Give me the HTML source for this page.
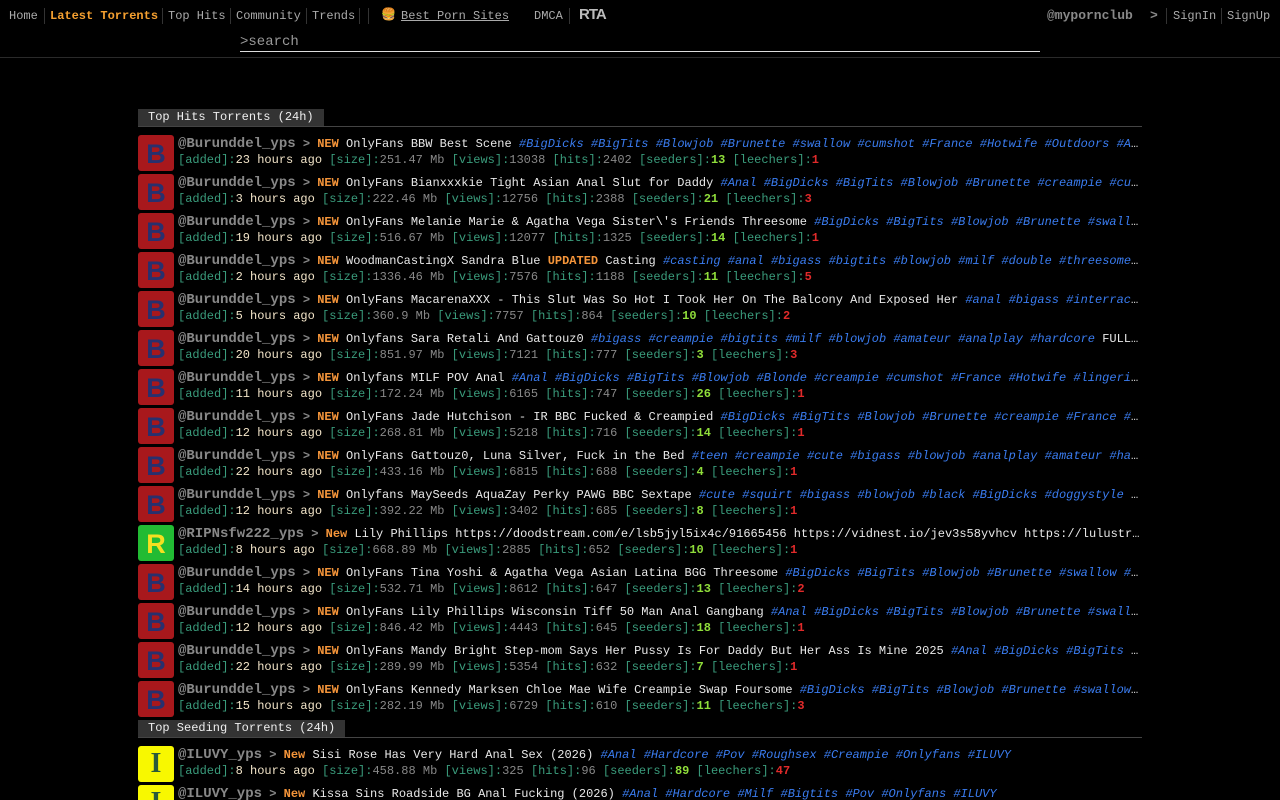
<!DOCTYPE html>
<html style="width:1280px;height:800px;overflow:hidden"><head><meta charset="utf-8"><style>
*{margin:0;padding:0;box-sizing:border-box}
body{width:1280px;height:800px;overflow:hidden;background:#000;font-family:"Liberation Mono",monospace;font-size:12px;color:#ddd;position:relative}
.n{position:absolute;top:9px;font-size:12px;color:#aaa;line-height:14px;white-space:nowrap}
.sep{position:absolute;top:8px;width:1px;height:16px;background:#333}
#search{position:absolute;left:240px;top:33px;width:800px;height:19px;border-bottom:1px solid #ddd;color:#999;font-size:14px;line-height:18px}
#hl{position:absolute;left:0;top:57px;width:1280px;height:1px;background:#2a2a2a}
.sec{position:absolute;left:138px;width:1004px;height:18px;border-bottom:1px solid #444}
.sec span{display:inline-block;background:#333;color:#eee;font-size:12px;line-height:17px;padding:0 10px 0 10px;height:17px}
.row{position:absolute;left:138px;width:1004px;height:39px}
.av{position:absolute;left:0;top:0;width:36px;height:36px;border-radius:3px;text-align:center;font:bold 27px/38px "Liberation Sans",sans-serif}
.l1,.l2{position:absolute;left:40px;width:964px;white-space:nowrap;overflow:hidden;text-overflow:ellipsis;line-height:16px}
.l1{top:1px}.l2{top:17px}
.u{font-size:14px;font-weight:bold;color:#888}
.g{color:#888;font-weight:bold}
.nw{color:#f5953a;font-weight:bold}
.t{color:#e8e8e8}
.tg{color:#3a7cf0;font-style:italic}
.lb{color:#3a9c7c}
.tm{color:#f2e4c8}
.v{color:#888}
.sd{color:#8fdd3a;font-weight:bold}
.lc{color:#e02a2a;font-weight:bold}
.rb{background:#a8181c;color:#28306e}
</style></head><body>
<div class="n" style="left:9px">Home</div><div class="sep" style="left:44px"></div>
<div class="n" style="left:50px;color:#f5a030;font-weight:bold">Latest Torrents</div><div class="sep" style="left:162px"></div>
<div class="n" style="left:168px">Top Hits</div><div class="sep" style="left:230px"></div>
<div class="n" style="left:236px">Community</div><div class="sep" style="left:306px"></div>
<div class="n" style="left:312px">Trends</div><div class="sep" style="left:359px"></div><div class="sep" style="left:368px"></div>
<div class="n" style="left:381px;top:8px;font-size:12px">🍔</div>
<div class="n" style="left:401px;text-decoration:underline">Best Porn Sites</div>
<div class="n" style="left:534px">DMCA</div><div class="sep" style="left:569px"></div>
<div class="n" style="left:579px;top:6px;font:bold 15px 'Liberation Sans',sans-serif;color:#bbb;letter-spacing:-1px">RTA</div>
<div class="n" style="left:1047px;top:9px;font-size:13px;font-weight:bold;color:#888">@myporncl ub</div>
<div class="n" style="left:1047px;top:9px;font-size:13px;font-weight:bold;color:#888;background:#000;width:110px">@mypornclub</div>
<div class="n" style="left:1150px;top:9px;font-size:13px;font-weight:bold;color:#888">&gt;</div>
<div class="sep" style="left:1166px"></div>
<div class="n" style="left:1173px">SignIn</div><div class="sep" style="left:1221px"></div>
<div class="n" style="left:1227px">SignUp</div>
<div id="search">&gt;search</div>
<div id="hl"></div>

<div class="sec" style="top:109px"><span>Top Hits Torrents (24h)</span></div>

<div class="row" style="top:135px"><div class="av rb">B</div><div class="l1"><span class="u">@Burunddel_yps</span> <span class="g">&gt;</span> <span class="nw">NEW</span> <span class="t">OnlyFans BBW Best Scene</span> <span class="tg">#BigDicks #BigTits #Blowjob #Brunette #swallow #cumshot #France #Hotwife #Outdoors #Amateur</span></div><div class="l2"><span class="lb">[added]:</span><span class="tm">23 hours ago</span> <span class="lb">[size]:</span><span class="v">251.47 Mb</span> <span class="lb">[views]:</span><span class="v">13038</span> <span class="lb">[hits]:</span><span class="v">2402</span>  <span class="lb">[seeders]:</span><span class="sd">13</span> <span class="lb">[leechers]:</span><span class="lc">1</span></div></div>

<div class="row" style="top:174px"><div class="av rb">B</div><div class="l1"><span class="u">@Burunddel_yps</span> <span class="g">&gt;</span> <span class="nw">NEW</span> <span class="t">OnlyFans Bianxxxkie Tight Asian Anal Slut for Daddy</span> <span class="tg">#Anal #BigDicks #BigTits #Blowjob #Brunette #creampie #cumshot</span></div><div class="l2"><span class="lb">[added]:</span><span class="tm">3 hours ago</span> <span class="lb">[size]:</span><span class="v">222.46 Mb</span> <span class="lb">[views]:</span><span class="v">12756</span> <span class="lb">[hits]:</span><span class="v">2388</span>  <span class="lb">[seeders]:</span><span class="sd">21</span> <span class="lb">[leechers]:</span><span class="lc">3</span></div></div>

<div class="row" style="top:213px"><div class="av rb">B</div><div class="l1"><span class="u">@Burunddel_yps</span> <span class="g">&gt;</span> <span class="nw">NEW</span> <span class="t">OnlyFans Melanie Marie &amp; Agatha Vega Sister\'s Friends Threesome</span> <span class="tg">#BigDicks #BigTits #Blowjob #Brunette #swallow #cumshot</span></div><div class="l2"><span class="lb">[added]:</span><span class="tm">19 hours ago</span> <span class="lb">[size]:</span><span class="v">516.67 Mb</span> <span class="lb">[views]:</span><span class="v">12077</span> <span class="lb">[hits]:</span><span class="v">1325</span>  <span class="lb">[seeders]:</span><span class="sd">14</span> <span class="lb">[leechers]:</span><span class="lc">1</span></div></div>

<div class="row" style="top:252px"><div class="av rb">B</div><div class="l1"><span class="u">@Burunddel_yps</span> <span class="g">&gt;</span> <span class="nw">NEW</span> <span class="t">WoodmanCastingX Sandra Blue</span> <span class="nw">UPDATED</span> <span class="t">Casting</span> <span class="tg">#casting #anal #bigass #bigtits #blowjob #milf #double #threesome #gangbang</span></div><div class="l2"><span class="lb">[added]:</span><span class="tm">2 hours ago</span> <span class="lb">[size]:</span><span class="v">1336.46 Mb</span> <span class="lb">[views]:</span><span class="v">7576</span> <span class="lb">[hits]:</span><span class="v">1188</span>  <span class="lb">[seeders]:</span><span class="sd">11</span> <span class="lb">[leechers]:</span><span class="lc">5</span></div></div>

<div class="row" style="top:291px"><div class="av rb">B</div><div class="l1"><span class="u">@Burunddel_yps</span> <span class="g">&gt;</span> <span class="nw">NEW</span> <span class="t">OnlyFans MacarenaXXX - This Slut Was So Hot I Took Her On The Balcony And Exposed Her</span> <span class="tg">#anal #bigass #interracial</span></div><div class="l2"><span class="lb">[added]:</span><span class="tm">5 hours ago</span> <span class="lb">[size]:</span><span class="v">360.9 Mb</span> <span class="lb">[views]:</span><span class="v">7757</span> <span class="lb">[hits]:</span><span class="v">864</span>  <span class="lb">[seeders]:</span><span class="sd">10</span> <span class="lb">[leechers]:</span><span class="lc">2</span></div></div>

<div class="row" style="top:330px"><div class="av rb">B</div><div class="l1"><span class="u">@Burunddel_yps</span> <span class="g">&gt;</span> <span class="nw">NEW</span> <span class="t">Onlyfans Sara Retali And Gattouz0</span> <span class="tg">#bigass #creampie #bigtits #milf #blowjob #amateur #analplay #hardcore</span> <span class="t">FULL HD</span></div><div class="l2"><span class="lb">[added]:</span><span class="tm">20 hours ago</span> <span class="lb">[size]:</span><span class="v">851.97 Mb</span> <span class="lb">[views]:</span><span class="v">7121</span> <span class="lb">[hits]:</span><span class="v">777</span>  <span class="lb">[seeders]:</span><span class="sd">3</span> <span class="lb">[leechers]:</span><span class="lc">3</span></div></div>

<div class="row" style="top:369px"><div class="av rb">B</div><div class="l1"><span class="u">@Burunddel_yps</span> <span class="g">&gt;</span> <span class="nw">NEW</span> <span class="t">Onlyfans MILF POV Anal</span> <span class="tg">#Anal #BigDicks #BigTits #Blowjob #Blonde #creampie #cumshot #France #Hotwife #lingerie #milf</span></div><div class="l2"><span class="lb">[added]:</span><span class="tm">11 hours ago</span> <span class="lb">[size]:</span><span class="v">172.24 Mb</span> <span class="lb">[views]:</span><span class="v">6165</span> <span class="lb">[hits]:</span><span class="v">747</span>  <span class="lb">[seeders]:</span><span class="sd">26</span> <span class="lb">[leechers]:</span><span class="lc">1</span></div></div>

<div class="row" style="top:408px"><div class="av rb">B</div><div class="l1"><span class="u">@Burunddel_yps</span> <span class="g">&gt;</span> <span class="nw">NEW</span> <span class="t">OnlyFans Jade Hutchison - IR BBC Fucked &amp; Creampied</span> <span class="tg">#BigDicks #BigTits #Blowjob #Brunette #creampie #France #Hotwife</span></div><div class="l2"><span class="lb">[added]:</span><span class="tm">12 hours ago</span> <span class="lb">[size]:</span><span class="v">268.81 Mb</span> <span class="lb">[views]:</span><span class="v">5218</span> <span class="lb">[hits]:</span><span class="v">716</span>  <span class="lb">[seeders]:</span><span class="sd">14</span> <span class="lb">[leechers]:</span><span class="lc">1</span></div></div>

<div class="row" style="top:447px"><div class="av rb">B</div><div class="l1"><span class="u">@Burunddel_yps</span> <span class="g">&gt;</span> <span class="nw">NEW</span> <span class="t">OnlyFans Gattouz0, Luna Silver, Fuck in the Bed</span> <span class="tg">#teen #creampie #cute #bigass #blowjob #analplay #amateur #hardcore</span></div><div class="l2"><span class="lb">[added]:</span><span class="tm">22 hours ago</span> <span class="lb">[size]:</span><span class="v">433.16 Mb</span> <span class="lb">[views]:</span><span class="v">6815</span> <span class="lb">[hits]:</span><span class="v">688</span>  <span class="lb">[seeders]:</span><span class="sd">4</span> <span class="lb">[leechers]:</span><span class="lc">1</span></div></div>

<div class="row" style="top:486px"><div class="av rb">B</div><div class="l1"><span class="u">@Burunddel_yps</span> <span class="g">&gt;</span> <span class="nw">NEW</span> <span class="t">Onlyfans MaySeeds AquaZay Perky PAWG BBC Sextape</span> <span class="tg">#cute #squirt #bigass #blowjob #black #BigDicks #doggystyle #cumshot</span></div><div class="l2"><span class="lb">[added]:</span><span class="tm">12 hours ago</span> <span class="lb">[size]:</span><span class="v">392.22 Mb</span> <span class="lb">[views]:</span><span class="v">3402</span> <span class="lb">[hits]:</span><span class="v">685</span>  <span class="lb">[seeders]:</span><span class="sd">8</span> <span class="lb">[leechers]:</span><span class="lc">1</span></div></div>

<div class="row" style="top:525px"><div class="av" style="background:#22bb33;color:#f5e020">R</div><div class="l1"><span class="u">@RIPNsfw222_yps</span> <span class="g">&gt;</span> <span class="nw">New</span> <span class="t">Lily Phillips https://doodstream.com/e/lsb5jyl5ix4c/91665456 https://vidnest.io/jev3s58yvhcv https://lulustream.com</span></div><div class="l2"><span class="lb">[added]:</span><span class="tm">8 hours ago</span> <span class="lb">[size]:</span><span class="v">668.89 Mb</span> <span class="lb">[views]:</span><span class="v">2885</span> <span class="lb">[hits]:</span><span class="v">652</span>  <span class="lb">[seeders]:</span><span class="sd">10</span> <span class="lb">[leechers]:</span><span class="lc">1</span></div></div>

<div class="row" style="top:564px"><div class="av rb">B</div><div class="l1"><span class="u">@Burunddel_yps</span> <span class="g">&gt;</span> <span class="nw">NEW</span> <span class="t">OnlyFans Tina Yoshi &amp; Agatha Vega Asian Latina BGG Threesome</span> <span class="tg">#BigDicks #BigTits #Blowjob #Brunette #swallow #cumshot</span></div><div class="l2"><span class="lb">[added]:</span><span class="tm">14 hours ago</span> <span class="lb">[size]:</span><span class="v">532.71 Mb</span> <span class="lb">[views]:</span><span class="v">8612</span> <span class="lb">[hits]:</span><span class="v">647</span>  <span class="lb">[seeders]:</span><span class="sd">13</span> <span class="lb">[leechers]:</span><span class="lc">2</span></div></div>

<div class="row" style="top:603px"><div class="av rb">B</div><div class="l1"><span class="u">@Burunddel_yps</span> <span class="g">&gt;</span> <span class="nw">NEW</span> <span class="t">OnlyFans Lily Phillips Wisconsin Tiff 50 Man Anal Gangbang</span> <span class="tg">#Anal #BigDicks #BigTits #Blowjob #Brunette #swallow #cumshot</span></div><div class="l2"><span class="lb">[added]:</span><span class="tm">12 hours ago</span> <span class="lb">[size]:</span><span class="v">846.42 Mb</span> <span class="lb">[views]:</span><span class="v">4443</span> <span class="lb">[hits]:</span><span class="v">645</span>  <span class="lb">[seeders]:</span><span class="sd">18</span> <span class="lb">[leechers]:</span><span class="lc">1</span></div></div>

<div class="row" style="top:642px"><div class="av rb">B</div><div class="l1"><span class="u">@Burunddel_yps</span> <span class="g">&gt;</span> <span class="nw">NEW</span> <span class="t">OnlyFans Mandy Bright Step-mom Says Her Pussy Is For Daddy But Her Ass Is Mine 2025</span> <span class="tg">#Anal #BigDicks #BigTits #Blowjob</span></div><div class="l2"><span class="lb">[added]:</span><span class="tm">22 hours ago</span> <span class="lb">[size]:</span><span class="v">289.99 Mb</span> <span class="lb">[views]:</span><span class="v">5354</span> <span class="lb">[hits]:</span><span class="v">632</span>  <span class="lb">[seeders]:</span><span class="sd">7</span> <span class="lb">[leechers]:</span><span class="lc">1</span></div></div>

<div class="row" style="top:681px"><div class="av rb">B</div><div class="l1"><span class="u">@Burunddel_yps</span> <span class="g">&gt;</span> <span class="nw">NEW</span> <span class="t">OnlyFans Kennedy Marksen Chloe Mae Wife Creampie Swap Foursome</span> <span class="tg">#BigDicks #BigTits #Blowjob #Brunette #swallow #cumshot</span></div><div class="l2"><span class="lb">[added]:</span><span class="tm">15 hours ago</span> <span class="lb">[size]:</span><span class="v">282.19 Mb</span> <span class="lb">[views]:</span><span class="v">6729</span> <span class="lb">[hits]:</span><span class="v">610</span>  <span class="lb">[seeders]:</span><span class="sd">11</span> <span class="lb">[leechers]:</span><span class="lc">3</span></div></div>

<div class="sec" style="top:720px"><span>Top Seeding Torrents (24h)</span></div>

<div class="row" style="top:746px"><div class="av" style="background:#f8f800;color:#2a5a3a;font:bold 28px/36px 'Liberation Serif',serif">I</div><div class="l1"><span class="u">@ILUVY_yps</span> <span class="g">&gt;</span> <span class="nw">New</span> <span class="t">Sisi Rose Has Very Hard Anal Sex (2026)</span> <span class="tg">#Anal #Hardcore #Pov #Roughsex #Creampie #Onlyfans #ILUVY</span></div><div class="l2"><span class="lb">[added]:</span><span class="tm">8 hours ago</span> <span class="lb">[size]:</span><span class="v">458.88 Mb</span> <span class="lb">[views]:</span><span class="v">325</span> <span class="lb">[hits]:</span><span class="v">96</span>  <span class="lb">[seeders]:</span><span class="sd">89</span> <span class="lb">[leechers]:</span><span class="lc">47</span></div></div>

<div class="row" style="top:785px;height:15px;overflow:hidden"><div class="av" style="background:#f8f800;color:#2a5a3a;font:bold 28px/36px 'Liberation Serif',serif">I</div><div class="l1"><span class="u">@ILUVY_yps</span> <span class="g">&gt;</span> <span class="nw">New</span> <span class="t">Kissa Sins Roadside BG Anal Fucking (2026)</span> <span class="tg">#Anal #Hardcore #Milf #Bigtits #Pov #Onlyfans #ILUVY</span></div></div>
</body></html>
